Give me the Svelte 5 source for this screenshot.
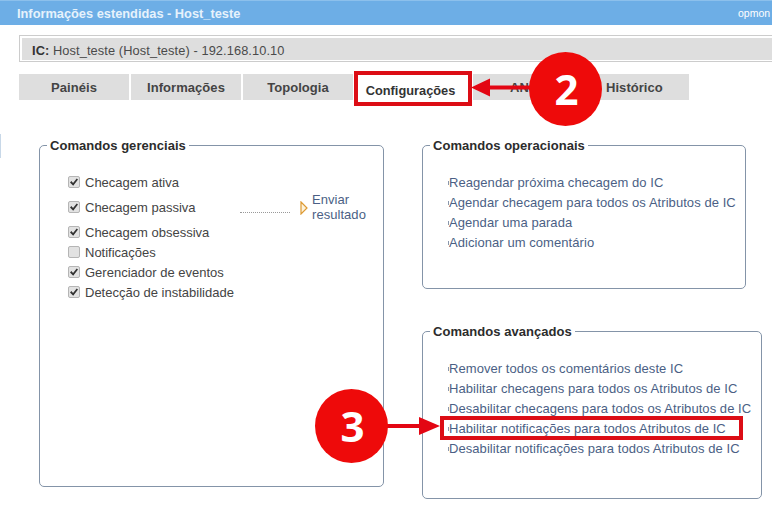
<script>
  const tabs = ["Painéis", "Informações", "Topologia", "Configurações", "ANS", "Histórico"];

  const checks = [
    { label: "Checagem ativa", on: true },
    { label: "Checagem passiva", on: true, send: true },
    { label: "Checagem obsessiva", on: true },
    { label: "Notificações", on: false },
    { label: "Gerenciador de eventos", on: true },
    { label: "Detecção de instabilidade", on: true },
  ];

  const operational = [
    "Reagendar próxima checagem do IC",
    "Agendar checagem para todos os Atributos de IC",
    "Agendar uma parada",
    "Adicionar um comentário",
  ];

  const advanced = [
    "Remover todos os comentários deste IC",
    "Habilitar checagens para todos os Atributos de IC",
    "Desabilitar checagens para todos os Atributos de IC",
    "Habilitar notificações para todos Atributos de IC",
    "Desabilitar notificações para todos Atributos de IC",
  ];
</script>

<div class="page">
  <header class="top">
    <span class="title">Informações estendidas - Host_teste</span>
    <span class="user">opmon</span>
  </header>

  <div class="ic-box">
    <div class="ic-inner"><b>IC:</b> Host_teste (Host_teste) - 192.168.10.10</div>
  </div>

  <nav class="tabs">
    {#each tabs as tab}
      <div class="tab" class:active={tab === "Configurações"}>{tab}</div>
    {/each}
  </nav>

  <main class="panels">
    <fieldset class="panel left">
      <legend>Comandos gerenciais</legend>
      <div class="checks">
        {#each checks as c}
          <div class="check" class:tall={c.send}>
            <label><input type="checkbox" checked={c.on} />{c.label}</label>
            {#if c.send}
              <span class="dots"></span>
              <svg class="send-icon" width="8" height="14" viewBox="0 0 8 14">
                <path d="M1 1 L7 7 L1 13 Z" fill="#fdf3dc" stroke="#dd9a33" stroke-width="1.2" />
              </svg>
              <a class="send" href="#top">Enviar<br />resultado</a>
            {/if}
          </div>
        {/each}
      </div>
    </fieldset>

    <div class="right">
      <fieldset class="panel oper">
        <legend>Comandos operacionais</legend>
        <ul>
          {#each operational as item}
            <li><a href="#top">{item}</a></li>
          {/each}
        </ul>
      </fieldset>

      <fieldset class="panel adv">
        <legend>Comandos avançados</legend>
        <ul>
          {#each advanced as item, i}
            <li class:marked={i === 3}><a href="#top">{item}</a></li>
          {/each}
        </ul>
      </fieldset>
    </div>
  </main>

  <!-- annotations drawn on top of the screenshot -->
  <div class="side-mark"></div>

  <svg class="arrow arrow-2" width="62" height="20" viewBox="0 0 62 20">
    <path d="M0 9.5 L19 0.5 L19 7.5 L62 7.5 L62 11.5 L19 11.5 L19 18.5 Z" fill="#e30613" />
  </svg>
  <div class="badge badge-2">2</div>

  <svg class="arrow arrow-3" width="56" height="20" viewBox="0 0 56 20">
    <path d="M0 8 L33 8 L33 1 L54 10 L33 19 L33 12 L0 12 Z" fill="#e30613" />
  </svg>
  <div class="badge badge-3">3</div>
</div>

<style>
  :global(body) {
    margin: 0;
    background: #fff;
  }
  .page {
    position: relative;
    width: 772px;
    height: 509px;
    overflow: hidden;
    font-family: "Liberation Sans", Arial, sans-serif;
    font-size: 13px;
    color: #444;
  }
  .top {
    height: 25px;
    background: #6daee6;
    color: #fff;
    display: flex;
    justify-content: space-between;
    align-items: center;
    padding-left: 17px;
    box-sizing: border-box;
    border-top: 1px solid #8cc0ec;
  }
  .title {
    font-weight: bold;
    font-size: 12.8px;
    color: #e6f2fc;
  }
  .user {
    font-size: 10.5px;
    width: 34px;
    white-space: nowrap;
    overflow: hidden;
  }
  .ic-box {
    margin: 10px 0 0 19px;
    border: 1px solid #ccc;
    border-right: none;
    padding: 2px 0 1px 2px;
  }
  .ic-inner {
    height: 22px;
    line-height: 25px;
    background: #dedede;
    padding-left: 10px;
    font-size: 12.8px;
    color: #4a4a4a;
    white-space: nowrap;
    letter-spacing: 0.1px;
  }
  .ic-inner b {
    color: #333;
  }
  .tabs {
    display: flex;
    margin: 12px 0 0 19px;
    gap: 2px;
    height: 26px;
  }
  .tab {
    width: 110px;
    height: 26px;
    line-height: 27px;
    background: #dedede;
    text-align: center;
    font-weight: bold;
    font-size: 13px;
    color: #444;
    letter-spacing: 0.05px;
  }
  .tab.active {
    box-sizing: border-box;
    width: 118px;
    height: 35px;
    margin: -3px -1px 0 -1px;
    border: 4px solid #dc0d15;
    padding-right: 5px;
    background: #fff;
    color: #333;
    line-height: 31px;
    font-size: 12.8px;
    letter-spacing: 0;
    position: relative;
    z-index: 1;
  }
  .tab:nth-child(5) {
    width: 118px;
    text-align: left;
    text-indent: 37px;
  }
  .tab:nth-child(6) {
    width: 98px;
    margin-left: -2px;
    text-align: left;
    text-indent: 15px;
  }
  .panels {
    display: flex;
    align-items: flex-start;
    margin: 45px 0 0 39px;
    gap: 38px;
  }
  .panel {
    margin: 0;
    padding: 0;
    box-sizing: border-box;
    border: 1px solid #8494a8;
    border-radius: 5px;
    min-width: 0;
  }
  legend {
    margin-left: 7px;
    padding: 0 3px 0 3px;
    font-weight: bold;
    font-size: 13px;
    line-height: 15px;
    color: #2c2c2c;
    letter-spacing: 0.04px;
  }
  .left {
    width: 345px;
    height: 349px;
    margin-top: -7px;
  }
  .checks {
    padding: 19px 0 0 28px;
  }
  .check {
    display: flex;
    align-items: center;
    height: 20px;
    position: relative;
    white-space: nowrap;
  }
  .check.tall {
    height: 30px;
  }
  label {
    display: flex;
    align-items: center;
  }
  input {
    appearance: none;
    width: 10px;
    height: 10px;
    margin: 0 5px 0 0;
    border: 1px solid #b5b5b5;
    border-radius: 2px;
    background: #e2e2e2;
    position: relative;
    box-sizing: content-box;
  }
  input:checked::before {
    content: "";
    position: absolute;
    inset: 1px;
    background: #333;
    clip-path: polygon(0 55%, 18% 38%, 38% 62%, 84% 5%, 100% 20%, 40% 98%);
  }
  .dots {
    position: absolute;
    left: 172px;
    top: 20px;
    width: 50px;
    border-top: 1px dotted #999;
  }
  .send-icon {
    position: absolute;
    left: 232px;
    top: 9px;
  }
  .send {
    position: absolute;
    left: 244px;
    top: 0;
    line-height: 15px;
    letter-spacing: 0.05px;
  }
  a {
    color: #4b5f85;
    text-decoration: none;
  }
  .right {
    display: flex;
    flex-direction: column;
    margin-top: -7px;
  }
  .oper {
    width: 324px;
    height: 151px;
  }
  .adv {
    width: 340px;
    height: 175px;
    margin-top: 35px;
  }
  ul {
    list-style: none;
    margin: 0;
    padding: 20px 0 0 26px;
  }
  li {
    height: 20px;
    line-height: 20px;
    white-space: nowrap;
    letter-spacing: 0.06px;
    position: relative;
  }
  li::before {
    content: "";
    position: absolute;
    left: -1px;
    top: 8px;
    width: 1px;
    height: 4px;
    background: #8a97ad;
  }
  li.marked::after {
    content: "";
    position: absolute;
    left: -9px;
    top: -3px;
    width: 303px;
    height: 24px;
    box-sizing: border-box;
    border: 4px solid #dc0d15;
  }
  .side-mark {
    position: absolute;
    left: 0;
    top: 134px;
    width: 1px;
    height: 24px;
    background: #c8d8e8;
  }
  .badge {
    position: absolute;
    width: 73px;
    height: 74px;
    padding-left: 2px;
    box-sizing: border-box;
    border-radius: 50%;
    background: #ee0a0a;
    color: #fff;
    font-family: "Open Sans", "Liberation Sans", sans-serif;
    font-weight: bold;
    font-size: 42px;
    line-height: 74px;
    text-align: center;
  }
  .badge-2 {
    left: 529px;
    top: 52px;
  }
  .badge-3 {
    left: 315px;
    top: 389px;
  }
  .arrow {
    position: absolute;
  }
  .arrow-2 {
    left: 471px;
    top: 78px;
  }
  .arrow-3 {
    left: 386px;
    top: 416px;
  }
</style>
